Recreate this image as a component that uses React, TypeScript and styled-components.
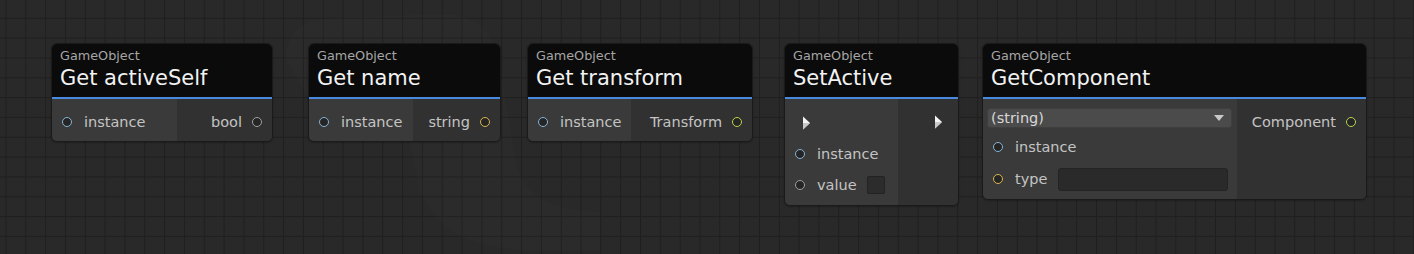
import React from "react";
import styled, { createGlobalStyle } from "styled-components";

const GlobalStyle = createGlobalStyle`
  html, body { margin: 0; padding: 0; background: #282828; }
  body { font-family: "DejaVu Sans", "Liberation Sans", sans-serif; }
`;

const Canvas = styled.div`
  position: relative;
  width: 1414px;
  height: 254px;
  overflow: hidden;
  background-color: #292929;
  background-image:
    linear-gradient(to right, #1f1f1f 1px, transparent 1px),
    linear-gradient(to bottom, #1f1f1f 1px, transparent 1px);
  background-size: 19.83px 19.83px;
  background-position: 5.5px 17.8px;
`;

const Watermark = styled.svg`
  position: absolute;
  left: 0;
  top: 0;
  pointer-events: none;
`;

const WatermarkText = styled.text`
  font-family: "DejaVu Sans", sans-serif;
  font-weight: bold;
  font-size: 32px;
  fill: rgba(255, 255, 255, 0.025);
  letter-spacing: 2px;
`;

const Node = styled.div<{ $x: number; $w: number }>`
  position: absolute;
  left: ${(p) => p.$x}px;
  top: 43px;
  width: ${(p) => p.$w}px;
  box-sizing: border-box;
  border: 1px solid #1a1a1a;
  border-radius: 6px;
  overflow: hidden;
  background: #313131;
  box-shadow: 0 1px 2px rgba(0, 0, 0, 0.25);
`;

const Header = styled.div`
  height: 55px;
  box-sizing: border-box;
  background: #0b0b0b;
  padding: 4px 8px 0 8px;
  border-bottom: 2px solid #4a8ade;
  display: flex;
  flex-direction: column;
  white-space: nowrap;
`;

const Kind = styled.div`
  font-size: 12.8px;
  line-height: 16px;
  color: #a6a6a6;
`;

const Title = styled.div`
  font-size: 21px;
  line-height: 28px;
  color: #f2f2f2;
`;

const Body = styled.div`
  display: flex;
  align-items: stretch;
`;

const Inputs = styled.div<{ $w: number; $pt: number; $pb: number }>`
  width: ${(p) => p.$w}px;
  flex: none;
  box-sizing: border-box;
  background: #3a3a3a;
  padding: ${(p) => p.$pt}px 4px ${(p) => p.$pb}px 10px;
  display: flex;
  flex-direction: column;
`;

const Outputs = styled.div`
  flex: 1;
  background: #313131;
  padding: 8px 10px 4px 8px;
  display: flex;
  flex-direction: column;
  align-items: flex-end;
`;

const Row = styled.div<{ $h: number }>`
  height: ${(p) => p.$h}px;
  display: flex;
  align-items: center;
  gap: 12px;
  white-space: nowrap;
`;

const OutRow = styled(Row)`
  gap: 10px;
`;

const Label = styled.span`
  font-size: 14.5px;
  color: #c4c4c4;
`;

const Port = styled.span<{ $c: string }>`
  width: 10px;
  height: 10px;
  box-sizing: border-box;
  border-radius: 50%;
  border: 1.5px solid ${(p) => p.$c};
  background: #252525;
  flex: none;
`;

const ExecIn = styled.div`
  padding-left: 7px;
  display: flex;
  align-items: center;
`;

const ExecOut = styled.div`
  padding-right: 5px;
  display: flex;
  align-items: center;
`;

const Check = styled.span`
  width: 18px;
  height: 18px;
  box-sizing: border-box;
  border-radius: 2px;
  background: #2c2c2c;
  border: 1px solid #222;
  margin-left: -2px;
`;

const Dropdown = styled.div`
  height: 20px;
  margin: 0 1px 3px -6px;
  box-sizing: border-box;
  background: #4b4b4b;
  border: 1px solid #3f3f3f;
  border-radius: 3px;
  display: flex;
  align-items: center;
  justify-content: space-between;
  padding: 0 7px 0 3px;
  font-size: 14.5px;
  color: #d8d8d8;
`;

const TextField = styled.span`
  width: 170px;
  height: 23px;
  box-sizing: border-box;
  background: #2a2a2a;
  border: 1px solid #232323;
  border-radius: 3px;
  margin-left: -1px;
`;

const C = {
  instance: "#86b4d6",
  grey: "#a0a0a0",
  string: "#d8b64e",
  obj: "#b6d44a",
};

const Arrow = () => (
  <svg width="9" height="14" viewBox="0 0 9 14">
    <path d="M1 0.5 L8 7 L1 13.5 Z" fill="#f4f4f4" />
    <path d="M1 7 L8 7 L1 13.5 Z" fill="#c8c8c8" />
  </svg>
);

const DropArrow = () => (
  <svg width="10" height="6" viewBox="0 0 10 6">
    <path d="M0 0 L10 0 L5 6 Z" fill="#c8c8c8" />
  </svg>
);

type SimpleProps = {
  x: number;
  w: number;
  lw: number;
  title: string;
  out: string;
  outColor: string;
};

const SimpleNode = ({ x, w, lw, title, out, outColor }: SimpleProps) => (
  <Node $x={x} $w={w}>
    <Header>
      <Kind>GameObject</Kind>
      <Title>{title}</Title>
    </Header>
    <Body>
      <Inputs $w={lw} $pt={8} $pb={4}>
        <Row $h={30}>
          <Port $c={C.instance} />
          <Label>instance</Label>
        </Row>
      </Inputs>
      <Outputs>
        <OutRow $h={30}>
          <Label>{out}</Label>
          <Port $c={outColor} />
        </OutRow>
      </Outputs>
    </Body>
  </Node>
);

export default function App() {
  return (
    <>
      <GlobalStyle />
      <Canvas>
        <Watermark width="1414" height="254" viewBox="0 0 1414 254">
          <path
            d="M286 60 Q286 20 330 18 L440 14 Q490 14 500 60 L515 160 Q525 205 580 210 L600 212 L600 250 L520 250 Q440 245 420 190 L400 100 Q390 60 350 65 Q320 70 310 100 Z"
            fill="rgba(255,255,255,0.01)"
          />
          <WatermarkText x="902" y="262">ALPHA</WatermarkText>
        </Watermark>

        <SimpleNode x={51} w={222} lw={125} title="Get activeSelf" out="bool" outColor={C.grey} />
        <SimpleNode x={308} w={193} lw={104} title="Get name" out="string" outColor={C.string} />
        <SimpleNode x={527} w={226} lw={103} title="Get transform" out="Transform" outColor={C.obj} />

        <Node $x={784} $w={175}>
          <Header>
            <Kind>GameObject</Kind>
            <Title>SetActive</Title>
          </Header>
          <Body>
            <Inputs $w={113} $pt={8} $pb={5}>
              <Row $h={31}>
                <ExecIn>
                  <Arrow />
                </ExecIn>
              </Row>
              <Row $h={31}>
                <Port $c={C.instance} />
                <Label>instance</Label>
              </Row>
              <Row $h={31}>
                <Port $c={C.grey} />
                <Label>value</Label>
                <Check />
              </Row>
            </Inputs>
            <Outputs>
              <OutRow $h={30}>
                <ExecOut>
                  <Arrow />
                </ExecOut>
              </OutRow>
            </Outputs>
          </Body>
        </Node>

        <Node $x={982} $w={385}>
          <Header>
            <Kind>GameObject</Kind>
            <Title>GetComponent</Title>
          </Header>
          <Body>
            <Inputs $w={254} $pt={9} $pb={4}>
              <Dropdown>
                <span>(string)</span>
                <DropArrow />
              </Dropdown>
              <Row $h={32}>
                <Port $c={C.instance} />
                <Label>instance</Label>
              </Row>
              <Row $h={32}>
                <Port $c={C.string} />
                <Label>type</Label>
                <TextField />
              </Row>
            </Inputs>
            <Outputs>
              <OutRow $h={30}>
                <Label>Component</Label>
                <Port $c={C.obj} />
              </OutRow>
            </Outputs>
          </Body>
        </Node>
      </Canvas>
    </>
  );
}
